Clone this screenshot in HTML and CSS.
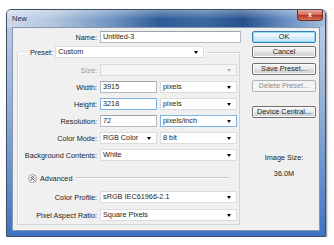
FILE: index.html
```html
<!DOCTYPE html>
<html lang="en">
<head>
    <meta charset="UTF-8">
    <meta name="viewport" content="width=device-width, initial-scale=1.0">
    <title>New</title>
    <link rel="stylesheet" href="styles.css">
</head>
<body>
    <div class="window">
        <div class="titlebar">
            <span class="title">New</span>
            <span class="close">x</span>
        </div>
        <div class="client">
            <div class="main">
                <div class="row">
                    <span class="lbl lbl-top">Name:</span>
                    <div class="field name">Untitled-3</div>
                </div>
                <fieldset class="group">
                    <legend class="preset">
                        <span>Preset:</span>
                        <div class="combo preset-box">Custom</div>
                    </legend>
                    <div class="row">
                        <span class="lbl off">Size:</span>
                        <div class="combo wide disabled"></div>
                    </div>
                    <div class="row">
                        <span class="lbl">Width:</span>
                        <div class="field short">3915</div>
                        <div class="combo unit">pixels</div>
                    </div>
                    <div class="row">
                        <span class="lbl">Height:</span>
                        <div class="field short hover">3218</div>
                        <div class="combo unit">pixels</div>
                    </div>
                    <div class="row">
                        <span class="lbl">Resolution:</span>
                        <div class="field short">72</div>
                        <div class="combo unit hover">pixels/inch</div>
                    </div>
                    <div class="row">
                        <span class="lbl">Color Mode:</span>
                        <div class="combo short">RGB Color</div>
                        <div class="combo unit">8 bit</div>
                    </div>
                    <div class="row">
                        <span class="lbl">Background Contents:</span>
                        <div class="combo wide">White</div>
                    </div>
                    <div class="row advanced">
                        <svg class="adv-icon" width="9" height="9" viewBox="0 0 9 9">
                            <circle cx="4.5" cy="4.5" r="4" fill="#f4f4f4" stroke="#8e8f8f" stroke-width="0.8"/>
                            <path d="M2.6 4.2 L4.5 2.5 L6.4 4.2 M2.6 6.4 L4.5 4.7 L6.4 6.4" fill="none" stroke="#333" stroke-width="0.9"/>
                        </svg>
                        <span>Advanced</span>
                        <div class="rule"></div>
                    </div>
                    <div class="row profile">
                        <span class="lbl">Color Profile:</span>
                        <div class="combo wide">sRGB IEC61966-2.1</div>
                    </div>
                    <div class="row aspect">
                        <span class="lbl">Pixel Aspect Ratio:</span>
                        <div class="combo wide">Square Pixels</div>
                    </div>
                </fieldset>
            </div>
            <div class="side">
                <div class="btn default">OK</div>
                <div class="btn cancel">Cancel</div>
                <div class="btn gap">Save Preset...</div>
                <div class="btn gap disabled">Delete Preset...</div>
                <div class="btn far">Device Central...</div>
                <div class="info">Image Size:<br>36.0M</div>
            </div>
        </div>
    </div>
</body>
</html>
```

FILE: styles.css
```css
body {
    margin: 0;
    background: #fff;
    font-family: "Liberation Sans", Arial, sans-serif;
    font-size: 7.3px;
    color: #1e1e1e;
}

.window {
    margin: 9px 0 0 6px;
    width: 320px;
    height: 228px;
    box-sizing: border-box;
    border: 1px solid #3f4f66;
    border-radius: 5px 5px 0 0;
    background: linear-gradient(180deg, #bccfe6 0%, #9db6d8 35%, #6b93cf 70%, #3f72c4 100%);
    display: flex;
    flex-direction: column;
    box-shadow: 1px 1px 2px rgba(0, 0, 0, 0.45);
}

.titlebar {
    height: 17px;
    display: flex;
    justify-content: space-between;
    align-items: flex-start;
    padding-left: 5px;
    background:
        linear-gradient(180deg, rgba(255, 255, 255, 0.35) 0%, rgba(255, 255, 255, 0) 55%),
        linear-gradient(90deg, #cbd9ea 0%, #b3c7df 14%, #6a8fbe 34%, #2d5c98 48%, #3a69a2 62%, #244f8c 74%, #6a90c2 88%, #a6bfdd 100%);
    border-radius: 4px 4px 0 0;
}

.title {
    line-height: 17px;
    font-size: 7.5px;
    color: #10203a;
    text-shadow: 0 0 3px rgba(255, 255, 255, 0.9);
}

.close {
    width: 26px;
    height: 11px;
    box-sizing: border-box;
    margin-right: 2px;
    border: 1px solid #6e2b22;
    border-top: none;
    border-radius: 0 0 4px 4px;
    background: linear-gradient(180deg, #eaa99b 0%, #d26f5e 45%, #b8321f 55%, #d9735f 100%);
    color: #fff;
    font-weight: bold;
    font-size: 7px;
    text-align: center;
    line-height: 9px;
}

.client {
    flex: 1;
    margin: 0 5px 5px;
    background: #f0f0f0;
    border: 1px solid #8797ae;
    display: flex;
    padding: 3px 2px 0 4px;
}

.main {
    width: 224px;
}

.row {
    display: flex;
    align-items: center;
    gap: 3px;
    height: 12px;
}

.group .row + .row {
    margin-top: 5px;
}

.lbl {
    width: 79px;
    text-align: right;
    white-space: nowrap;
}

.lbl-top {
    width: 80px;
}

.lbl.off {
    color: #9a9a9a;
}

.field, .combo {
    height: 12px;
    box-sizing: border-box;
    background: #fff;
    line-height: 10px;
    padding: 0 2px;
    white-space: nowrap;
}

.field {
    border: 1px solid #b5b8c0;
    border-top-color: #a0a3aa;
}

.field.hover, .combo.hover {
    border-color: #7fb2e6;
}

.name {
    width: 141px;
}

.short {
    width: 57px;
}

.unit {
    width: 77px;
}

.wide {
    width: 137px;
}

.combo {
    position: relative;
    border: 1px solid #dcdcdc;
    padding-right: 10px;
}

.combo::after {
    content: "";
    position: absolute;
    right: 5px;
    top: 4px;
    border-left: 2.5px solid transparent;
    border-right: 2.5px solid transparent;
    border-top: 3px solid #000;
}

.combo.disabled {
    background: #f5f5f5;
    border-color: #d9d9d9;
}

.combo.disabled::after {
    border-top-color: #b0b0b0;
}

.group {
    margin: 3px 1px 0 0;
    padding: 6px 2px 3px 0;
    border: 1px solid #cfd4d8;
    box-shadow: inset 1px 1px 0 #fff;
    min-width: 0;
}

.preset {
    display: flex;
    align-items: center;
    gap: 2px;
    padding: 0 3px 0 12px;
}

.preset-box {
    width: 149px;
}

.group .row.advanced {
    margin-top: 11px;
    gap: 0;
    padding-left: 10px;
}

.adv-icon {
    margin-right: 3px;
}

.rule {
    flex: 1;
    margin: 0 8px 0 4px;
    border-top: 1px solid #c9c9c9;
    border-bottom: 1px solid #fff;
}

.group .row.profile {
    margin-top: 7px;
}

.group .row.aspect {
    margin-top: 6px;
}

.side {
    margin-left: 11px;
    width: 64px;
    display: flex;
    flex-direction: column;
}

.btn {
    height: 12px;
    box-sizing: border-box;
    border: 1px solid #707070;
    border-radius: 2px;
    background: linear-gradient(180deg, #f4f4f4 0%, #ebebeb 48%, #dddddd 52%, #d0d0d0 100%);
    box-shadow: inset 0 0 0 1px #fbfbfb;
    text-align: center;
    line-height: 10px;
    white-space: nowrap;
}

.btn.default {
    border-color: #3c7fb1;
    background: linear-gradient(180deg, #f2f9fd 0%, #e6f3fb 48%, #d4ebf8 52%, #c8e4f6 100%);
    box-shadow: inset 0 0 0 1px #8fdaf7;
}

.btn.cancel {
    margin-top: 3px;
}

.btn.gap {
    margin-top: 5px;
}

.btn.disabled {
    border-color: #adb2b5;
    background: #f4f4f4;
    color: #8d8d8d;
    box-shadow: none;
}

.btn.far {
    margin-top: 14px;
}

.info {
    margin-top: 32px;
    line-height: 16px;
    text-align: center;
    color: #222;
}
```
